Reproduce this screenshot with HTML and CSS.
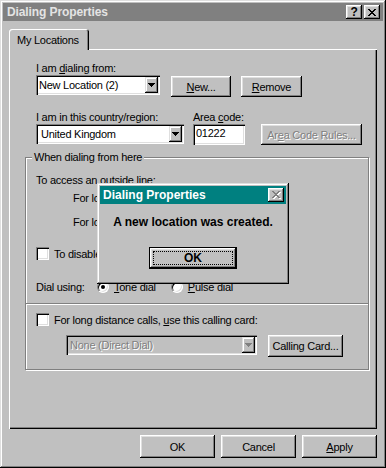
FILE: index.html
```html
<!DOCTYPE html>
<html lang="en">
<head>
    <meta charset="UTF-8">
    <meta name="viewport" content="width=device-width, initial-scale=1.0">
    <title>Dialing Properties</title>
    <link rel="stylesheet" href="styles.css">
</head>
<body>
    <div class="window">
        <!-- Title bar (inactive) -->
        <div class="titlebar">
            <span class="caption">Dialing Properties</span>
            <span class="tbtn tbtn-help">?</span>
            <span class="tbtn">
                <svg class="x-glyph" width="8" height="7" viewBox="0 0 8 7"><path d="M0 0h2v1h1v1h2v-1h1v-1h2v1h-1v1h-1v1h-1v1h1v1h1v1h1v1h-2v-1h-1v-1h-2v1h-1v1h-2v-1h1v-1h1v-1h1v-1h-1v-1h-1v-1h-1z" fill="#000"/></svg>
            </span>
        </div>

        <div class="client">
            <div class="tabs">
                <div class="tab">My Locations</div>
            </div>

            <div class="panel">
                <div class="label">I am <u>d</u>ialing from:</div>
                <div class="row">
                    <div class="combo combo-location">
                        <span class="combo-text">New Location (2)</span>
                        <span class="combo-arrow"><svg width="7" height="4" viewBox="0 0 7 4"><path d="M0 0h7v1h-1v1h-1v1h-1v1h-1v-1h-1v-1h-1v-1h-1z" fill="#000"/></svg></span>
                    </div>
                    <button class="btn btn-new"><u>N</u>ew...</button>
                    <button class="btn btn-remove"><u>R</u>emove</button>
                </div>

                <div class="row row-country">
                    <div class="col">
                        <div class="label">I am in this country/region:</div>
                        <div class="combo combo-country">
                            <span class="combo-text">United Kingdom</span>
                            <span class="combo-arrow"><svg width="7" height="4" viewBox="0 0 7 4"><path d="M0 0h7v1h-1v1h-1v1h-1v1h-1v-1h-1v-1h-1v-1h-1z" fill="#000"/></svg></span>
                        </div>
                    </div>
                    <div class="col col-area">
                        <div class="label">Area <u>c</u>ode:</div>
                        <div class="edit">01222</div>
                    </div>
                    <button class="btn btn-rules disabled">Ar<u>e</u>a Code Rules...</button>
                </div>

                <!-- Group: When dialing from here -->
                <div class="group">
                    <div class="group-title">When dialing from here</div>
                    <div class="label access">To access an outside line:</div>
                    <div class="dial-row">For local calls, dial:</div>
                    <div class="dial-row">For long distance calls, dial:</div>
                    <div class="check-row check-waiting">
                        <span class="checkbox"></span>
                        <span>To disable call waiting, dial:</span>
                    </div>
                    <div class="radio-row">
                        <span class="radio-label">Dial using:</span>
                        <span class="radio-item">
                            <span class="radio checked"></span>
                            <span><u>T</u>one dial</span>
                        </span>
                        <span class="radio-item radio-pulse">
                            <span class="radio"></span>
                            <span><u>P</u>ulse dial</span>
                        </span>
                    </div>
                    <div class="separator"></div>
                    <div class="check-row check-card">
                        <span class="checkbox"></span>
                        <span>For long distance calls, <u>u</u>se this calling card:</span>
                    </div>
                    <div class="row card-row">
                        <div class="combo combo-card disabled">
                            <span class="combo-text">None (Direct Dial)</span>
                            <span class="combo-arrow"><svg width="7" height="4" viewBox="0 0 7 4"><path d="M0 0h7v1h-1v1h-1v1h-1v1h-1v-1h-1v-1h-1v-1h-1z" fill="#808080"/></svg></span>
                        </div>
                        <button class="btn btn-card">Calling Card...</button>
                    </div>
                </div>
            </div>

            <div class="buttons">
                <button class="btn btn-dialog">OK</button>
                <button class="btn btn-dialog">Cancel</button>
                <button class="btn btn-dialog"><u>A</u>pply</button>
            </div>
        </div>

        <!-- Message box over the dialog -->
        <div class="msgbox">
            <div class="msg-titlebar">
                <span class="caption">Dialing Properties</span>
                <span class="tbtn">
                    <svg class="x-glyph" width="9" height="8" viewBox="0 0 9 8"><path d="M1 1h2v1h1v1h2v-1h1v-1h2v1h-1v1h-1v1h-1v1h1v1h1v1h1v1h-2v-1h-1v-1h-2v1h-1v1h-2v-1h1v-1h1v-1h1v-1h-1v-1h-1v-1h-1z" fill="#fff"/><path d="M0 0h2v1h1v1h2v-1h1v-1h2v1h-1v1h-1v1h-1v1h1v1h1v1h1v1h-2v-1h-1v-1h-2v1h-1v1h-2v-1h1v-1h1v-1h1v-1h-1v-1h-1v-1h-1z" fill="#808080"/></svg>
                </span>
            </div>
            <div class="msg-text">A new location was created.</div>
            <button class="btn btn-default">OK</button>
        </div>
    </div>
</body>
</html>
```

FILE: styles.css
```css
* {
    box-sizing: border-box;
}
body {
    margin: 0;
    font-family: "Liberation Sans", Arial, sans-serif;
    font-size: 11px;
    letter-spacing: -0.25px;
    color: #000;
    background-color: #c0c0c0;
}
u {
    text-decoration: underline;
}
.window {
    position: relative;
    width: 386px;
    height: 468px;
    padding: 3px;
    background-color: #c0c0c0;
    box-shadow: inset -1px -1px #000, inset 1px 1px #dfdfdf, inset -2px -2px #808080, inset 2px 2px #fff;
}
.titlebar {
    display: flex;
    align-items: center;
    height: 18px;
    padding: 0 3px 0 4px;
    background-color: #808080;
    color: #e4e4e4;
    font-size: 12px;
    font-weight: bold;
    letter-spacing: -0.1px;
}
.caption {
    flex: 1;
}
.tbtn {
    display: flex;
    align-items: center;
    justify-content: center;
    width: 16px;
    height: 14px;
    background-color: #c0c0c0;
    color: #000;
    font-size: 12px;
    font-weight: bold;
    box-shadow: inset -1px -1px #000, inset 1px 1px #fff, inset -2px -2px #808080, inset 2px 2px #dfdfdf;
}
.tbtn + .tbtn {
    margin-left: 2px;
}
.tbtn-help {
    padding-bottom: 1px;
}
.x-glyph {
    display: block;
}
svg {
    shape-rendering: crispEdges;
}

/* Client area */
.client {
    padding: 8px 6px 0;
}
.tabs {
    position: relative;
    z-index: 1;
    display: flex;
    margin-bottom: -1px;
}
.tab {
    display: flex;
    align-items: center;
    height: 21px;
    width: 80px;
    padding: 0 0 0 8px;
    background-color: #c0c0c0;
    border-radius: 3px 3px 0 0;
    box-shadow: inset 1px 1px #fff, inset -1px 0 #000, inset -2px 0 #808080;
}
.panel {
    height: 380px;
    padding: 13px 0 0 27px;
    box-shadow: inset 1px 1px #fff, inset -1px -1px #000, inset -2px -2px #808080;
}
.label {
    line-height: 13px;
    white-space: nowrap;
}
.row {
    display: flex;
    align-items: flex-start;
}

/* Controls */
.btn {
    display: flex;
    align-items: center;
    justify-content: center;
    padding: 0;
    border: none;
    background-color: #c0c0c0;
    font-family: inherit;
    font-size: 11px;
    letter-spacing: -0.25px;
    color: #000;
    box-shadow: inset -1px -1px #000, inset 1px 1px #fff, inset -2px -2px #808080, inset 2px 2px #dfdfdf;
}
.disabled {
    color: #808080;
    text-shadow: 1px 1px #fff;
}
.combo {
    display: flex;
    align-items: center;
    height: 20px;
    padding: 2px;
    background-color: #fff;
    box-shadow: inset 1px 1px #808080, inset 2px 2px #000, inset -1px -1px #fff, inset -2px -2px #dfdfdf;
}
.combo-text {
    flex: 1;
    padding-left: 1px;
    white-space: nowrap;
}
.combo-arrow {
    display: flex;
    align-items: center;
    justify-content: center;
    width: 13px;
    height: 16px;
    background-color: #c0c0c0;
    box-shadow: inset -1px -1px #000, inset 1px 1px #dfdfdf, inset -2px -2px #808080, inset 2px 2px #fff;
}
.combo-location {
    width: 124px;
}
.btn-new {
    width: 60px;
    height: 21px;
    margin: 1px 0 0 11px;
}
.btn-remove {
    width: 61px;
    height: 21px;
    margin: 1px 0 0 10px;
}
.row-country {
    align-items: flex-end;
    margin-top: 14px;
}
.combo-country {
    width: 148px;
    margin-bottom: 1px;
}
.combo-country .combo-text {
    padding-left: 3px;
}
.col-area {
    margin-left: 9px;
}
.edit {
    width: 52px;
    height: 21px;
    padding: 3px 3px 0;
    background-color: #fff;
    box-shadow: inset 1px 1px #808080, inset 2px 2px #000, inset -1px -1px #fff, inset -2px -2px #dfdfdf;
}
.btn-rules {
    width: 101px;
    height: 21px;
    margin-left: 16px;
}

/* Group box */
.group {
    width: 344px;
    margin: 12px 0 0 -11px;
    padding: 0 0 12px 10px;
    border: 1px solid #808080;
    box-shadow: inset 1px 1px #fff, 1px 1px #fff;
}
.group-title {
    width: fit-content;
    margin: -7px 0 0 -4px;
    padding: 0 2px;
    line-height: 13px;
    background-color: #c0c0c0;
}
.access {
    margin-top: 10px;
}
.dial-row {
    display: flex;
    align-items: center;
    height: 21px;
    margin-left: 37px;
    white-space: nowrap;
}
.dial-row + .dial-row {
    margin-top: 3px;
}
.check-row {
    display: flex;
    align-items: center;
    gap: 5px;
    height: 13px;
    white-space: nowrap;
}
.check-waiting {
    margin-top: 15px;
}
.checkbox {
    width: 13px;
    height: 13px;
    background-color: #fff;
    box-shadow: inset 1px 1px #808080, inset 2px 2px #000, inset -1px -1px #fff, inset -2px -2px #dfdfdf;
}
.radio-row {
    display: flex;
    align-items: center;
    height: 13px;
    margin-top: 20px;
    white-space: nowrap;
}
.radio-label {
    width: 61px;
}
.radio-item {
    display: flex;
    align-items: center;
    gap: 5px;
}
.radio-pulse {
    margin-left: 15px;
}
.radio {
    position: relative;
    width: 12px;
    height: 12px;
    border-radius: 50%;
    background-color: #fff;
    border: 1px solid;
    border-color: #808080 #fff #fff #808080;
    box-shadow: inset 1px 1px #000, inset -1px -1px #dfdfdf;
}
.radio.checked::after {
    content: "";
    position: absolute;
    left: 3px;
    top: 3px;
    width: 4px;
    height: 4px;
    border-radius: 50%;
    background-color: #000;
}
.separator {
    height: 2px;
    margin: 10px 0 0 -10px;
    border-top: 1px solid #808080;
    border-bottom: 1px solid #fff;
}
.check-card {
    margin-top: 8px;
}
.card-row {
    margin-top: 9px;
}
.combo-card {
    width: 191px;
    margin-left: 30px;
    background-color: #c0c0c0;
}
.combo-card .combo-text {
    padding-left: 2px;
}
.btn-card {
    width: 75px;
    height: 22px;
    margin-left: 11px;
}

/* Bottom buttons */
.buttons {
    display: flex;
    justify-content: flex-end;
    gap: 6px;
    margin-top: 6px;
}
.btn-dialog {
    width: 75px;
    height: 23px;
}

/* Message box */
.msgbox {
    position: absolute;
    left: 97px;
    top: 183px;
    width: 192px;
    height: 101px;
    padding: 3px;
    background-color: #c0c0c0;
    box-shadow: inset -1px -1px #000, inset 1px 1px #dfdfdf, inset -2px -2px #808080, inset 2px 2px #fff;
}
.msg-titlebar {
    display: flex;
    align-items: center;
    height: 18px;
    padding: 0 2px 0 3px;
    background-color: #008080;
    color: #fff;
    font-size: 12px;
    font-weight: bold;
    letter-spacing: 0;
}
.msg-text {
    margin-top: 11px;
    line-height: 15px;
    font-size: 12px;
    font-weight: bold;
    letter-spacing: 0;
    text-align: center;
}
.btn-default {
    position: relative;
    width: 88px;
    height: 22px;
    margin: 17px auto 0;
    border: 1px solid #000;
    font-size: 12px;
    font-weight: bold;
    letter-spacing: 0;
}
.btn-default::after {
    content: "";
    position: absolute;
    left: 3px;
    top: 3px;
    right: 3px;
    bottom: 3px;
    border: 1px dotted #000;
}
```
